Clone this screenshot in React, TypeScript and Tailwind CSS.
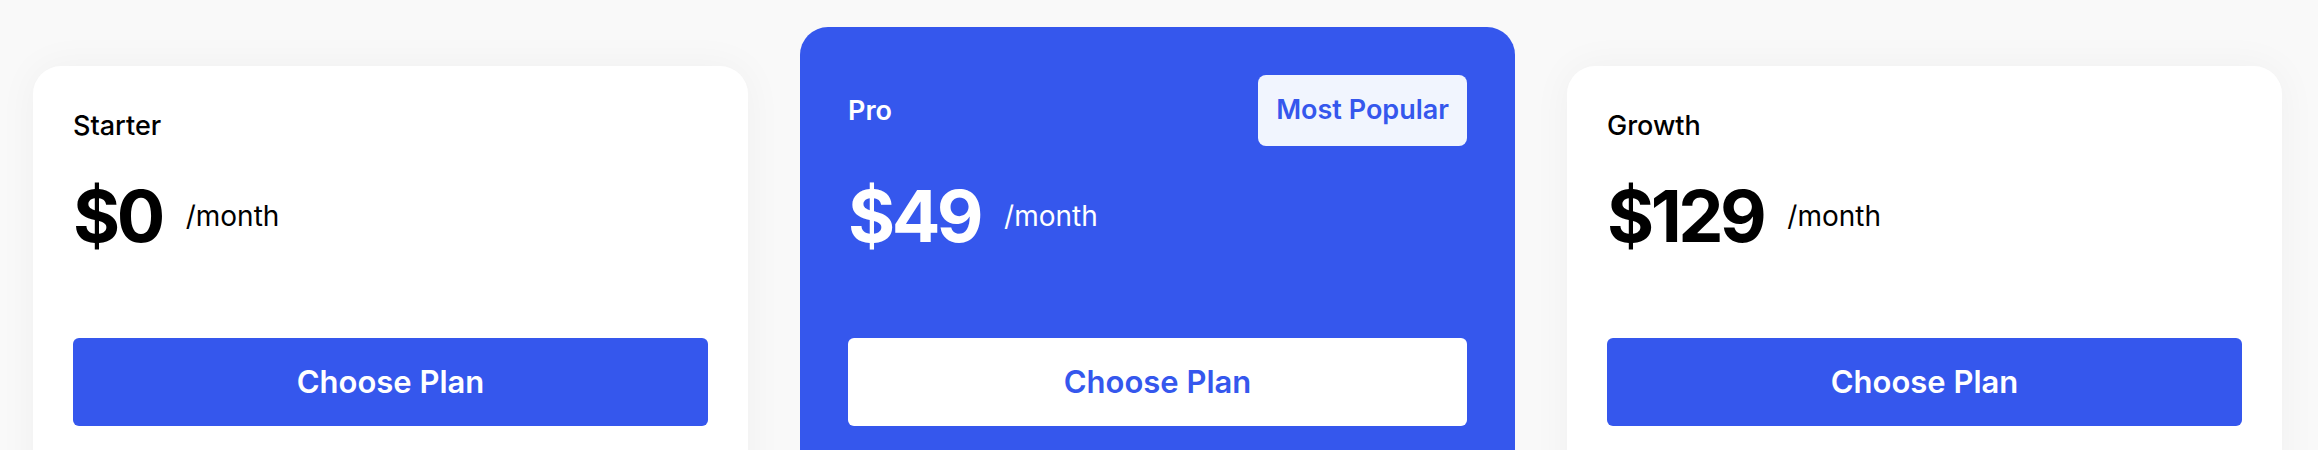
import { ReactNode } from 'react'

const BLUE = 'bg-[#3557ED]'

interface Plan {
  name: string
  price: string
  featured?: boolean
}

const PLANS: Plan[] = [
  { name: 'Starter', price: '$0' },
  { name: 'Pro', price: '$49', featured: true },
  { name: 'Growth', price: '$129' },
]

function Price({ value, light }: { value: string; light?: boolean }) {
  return (
    <div className={`mt-[34px] flex items-center gap-[24px] ${light ? 'text-white' : 'text-black'}`}>
      <span className="text-[72px] leading-[72px] font-bold tracking-[-3.5px]">{value}</span>
      <span className="text-[28px] leading-[40px]">/month</span>
    </div>
  )
}

function Card({ plan }: { plan: Plan }) {
  let header: ReactNode
  if (plan.featured) {
    header = (
      <div className="flex h-[71px] items-center justify-between">
        <h3 className="text-[27px] leading-[40px] font-semibold text-white">{plan.name}</h3>
        <span className="flex h-[71px] items-center rounded-lg bg-[#F1F5FE] px-[18px] text-[27px] font-semibold text-[#3557ED]">
          Most Popular
        </span>
      </div>
    )
  } else {
    header = <h3 className="text-[27px] leading-[40px] font-medium text-black">{plan.name}</h3>
  }

  return (
    <div
      className={`rounded-[28px] ${
        plan.featured
          ? `${BLUE} p-12 pb-20`
          : 'bg-white p-10 pb-20 shadow-[0_0_40px_rgba(0,0,0,0.045)]'
      }`}
    >
      {header}
      <Price value={plan.price} light={plan.featured} />
      <button
        className={`mt-[86px] flex h-[88px] w-full items-center justify-center rounded-md text-[31px] font-semibold ${
          plan.featured ? 'bg-white text-[#3557ED]' : `${BLUE} text-white`
        }`}
      >
        Choose Plan
      </button>
    </div>
  )
}

export default function App() {
  return (
    <div className="min-h-screen overflow-hidden bg-[#f9f9f9] font-['Inter',sans-serif]">
      <div className="grid grid-cols-3 items-end gap-[52px] pl-[33px] pr-[36px] pt-[27px]">
        {PLANS.map(p => (
          <Card key={p.name} plan={p} />
        ))}
      </div>
    </div>
  )
}
